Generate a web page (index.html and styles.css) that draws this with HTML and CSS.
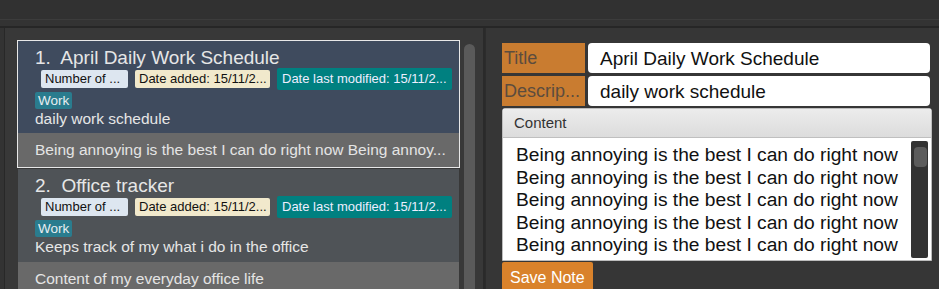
FILE: index.html
```html
<!DOCTYPE html>
<html lang="en">

<head>
    <meta charset="UTF-8">
    <title>Notes</title>
    <link rel="stylesheet" href="styles.css">
</head>

<body>
    <div class="menu-bar"></div>
    <div class="tool-bar"></div>

    <div class="main">
        <div class="list-pane">
            <div class="note-list">
                <div class="note-card selected">
                    <div class="note-head">
                        <div class="note-title">1.&nbsp; April Daily Work Schedule</div>
                        <div class="tags">
                            <span class="tag tag-count">Number of ...</span>
                            <span class="tag tag-added">Date added: 15/11/2...</span>
                            <span class="tag tag-modified">Date last modified: 15/11/2...</span>
                        </div>
                        <div class="tag tag-work">Work</div>
                        <div class="note-desc">daily work schedule</div>
                    </div>
                    <div class="note-content">Being annoying is the best I can do right now Being annoy...</div>
                </div>

                <div class="note-card">
                    <div class="note-head">
                        <div class="note-title">2.&nbsp; Office tracker</div>
                        <div class="tags">
                            <span class="tag tag-count">Number of ...</span>
                            <span class="tag tag-added">Date added: 15/11/2...</span>
                            <span class="tag tag-modified">Date last modified: 15/11/2...</span>
                        </div>
                        <div class="tag tag-work">Work</div>
                        <div class="note-desc">Keeps track of my what i do in the office</div>
                    </div>
                    <div class="note-content">Content of my everyday office life</div>
                </div>
            </div>
            <div class="list-scroll"><div class="list-thumb"></div></div>
        </div>

        <div class="editor-pane">
            <div class="field-row">
                <div class="field-label">Title</div>
                <div class="field-input">April Daily Work Schedule</div>
            </div>
            <div class="field-row">
                <div class="field-label">Descrip...</div>
                <div class="field-input">daily work schedule</div>
            </div>

            <div class="content-box">
                <div class="content-header">Content</div>
                <div class="content-body">
                    <div class="content-text">
                        Being annoying is the best I can do right now<br>
                        Being annoying is the best I can do right now<br>
                        Being annoying is the best I can do right now<br>
                        Being annoying is the best I can do right now<br>
                        Being annoying is the best I can do right now
                    </div>
                    <div class="content-scroll"><div class="content-thumb"></div></div>
                </div>
            </div>

            <button class="save-btn">Save Note</button>
        </div>
    </div>
</body>

</html>
```

FILE: styles.css
```css
body {
    margin: 0;
    background: #333333;
    font-family: "Liberation Sans", Arial, sans-serif;
    overflow: hidden;
}

.menu-bar {
    height: 19px;
    background: #313131;
    border-bottom: 1px solid #3c3c3c;
}

.tool-bar {
    height: 6px;
    background: #333333;
    border-bottom: 2px solid #262626;
}

.main {
    display: flex;
    height: 261px;
    overflow: hidden;
}

.list-pane {
    width: 481px;
    flex-shrink: 0;
    margin-left: 4px;
    border-left: 1px solid #282828;
    border-right: 2px solid #2a2a2a;
    background: #383838;
    padding: 12px 0 0 12px;
    display: flex;
    gap: 4px;
    box-sizing: border-box;
}

.note-list {
    width: 443px;
    flex-shrink: 0;
}

.list-scroll {
    width: 11px;
    padding-top: 4px;
}

.list-thumb {
    height: 260px;
    background: #5a5a5a;
    border-radius: 6px;
}

.note-card {
    color: #e6e6e6;
    border: 1px solid transparent;
}

.note-card.selected {
    border: 1px solid #e8e8e8;
}

.note-head {
    background: #4f5357;
    padding: 5px 0 6px 17px;
}

.selected .note-head {
    background: #3f4b5e;
    padding-bottom: 5px;
}

.note-title {
    font-size: 19px;
    line-height: 24px;
    white-space: nowrap;
}

.tags {
    display: flex;
    gap: 7px;
    height: 18px;
    margin-left: 6px;
    white-space: nowrap;
}

.tag {
    display: inline-block;
    font-size: 13px;
    line-height: 18px;
    height: 18px;
    padding: 0 4px;
    border-radius: 2px;
    white-space: nowrap;
    overflow: hidden;
    box-sizing: border-box;
}

.tag-count {
    background: #dde6f0;
    color: #111;
    width: 87px;
}

.tag-added {
    background: #f1e9cc;
    color: #111;
    width: 135px;
}

.tag-modified {
    background: #008080;
    color: #eef;
    width: 175px;
    height: 22px;
    line-height: 22px;
    margin-top: -2px;
    padding: 0 5px;
}

.tag-work {
    display: block;
    width: fit-content;
    background: #2a7c8e;
    color: #e8eef2;
    font-size: 13.5px;
    margin-top: 4px;
    height: 17px;
    line-height: 17px;
    padding: 0 3px;
}

.note-desc {
    font-size: 15.5px;
    line-height: 19px;
    white-space: nowrap;
}

.note-content {
    background: #696969;
    font-size: 15.5px;
    line-height: 34px;
    padding-left: 17px;
    color: #e4e4e4;
    white-space: nowrap;
}

.editor-pane {
    flex: 1;
    background: #363636;
    padding: 15px 7px 0 16px;
    border-left: 1px solid #2c2c2c;
}

.field-row {
    display: flex;
    gap: 3px;
    margin-bottom: 3px;
}

.field-label {
    width: 81px;
    height: 30px;
    background: #c97c30;
    color: #5c4c3e;
    font-size: 18px;
    line-height: 30px;
    padding-left: 2px;
    overflow: hidden;
    white-space: nowrap;
}

.field-input {
    flex: 1;
    height: 30px;
    background: #ffffff;
    border-radius: 4px;
    color: #111;
    font-size: 19px;
    line-height: 32px;
    padding-left: 12px;
    margin-right: 2px;
}

.content-box {
    margin-top: -1px;
    border: 1px solid #bdbdbd;
    border-radius: 3px 3px 0 0;
    background: #ffffff;
}

.content-header {
    height: 28px;
    background: linear-gradient(#ececec, #dcdcdc);
    border-bottom: 1px solid #bfbfbf;
    color: #333;
    font-size: 15px;
    line-height: 28px;
    padding-left: 11px;
}

.content-body {
    display: flex;
    height: 122px;
}

.content-text {
    flex: 1;
    color: #111;
    font-size: 19.2px;
    line-height: 22.5px;
    padding: 6px 0 0 13px;
    white-space: nowrap;
}

.content-scroll {
    width: 17px;
    margin: 3px 3px 2px 0;
    background: #333333;
    border-radius: 2px;
    padding: 6px 1px 0 3px;
    box-sizing: border-box;
}

.content-thumb {
    height: 20px;
    background: #5c5c5c;
    border-radius: 4px;
}

.save-btn {
    margin-top: 1px;
    background: #d9822b;
    border: none;
    border-radius: 2px 2px 0 0;
    color: #fff;
    font-family: inherit;
    font-size: 16px;
    height: 30px;
    padding: 2px 8px 0;
}
```
